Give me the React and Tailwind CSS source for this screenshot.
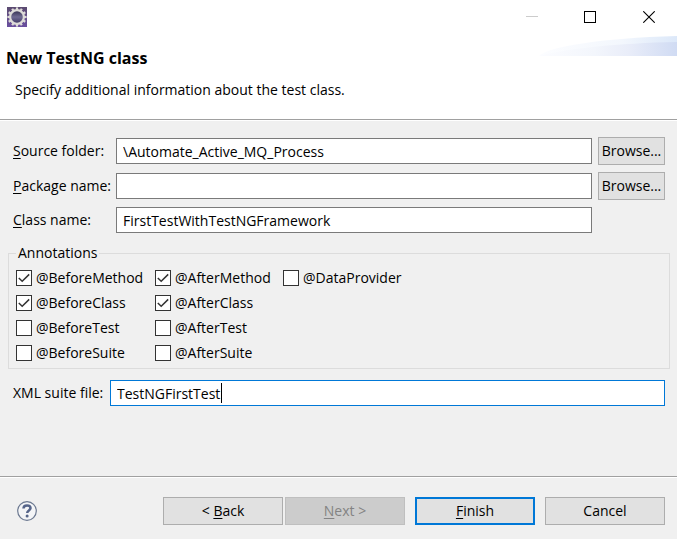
import React, { useState } from "react";

const ANNOTATIONS = [
  ["@BeforeMethod", "@AfterMethod", "@DataProvider"],
  ["@BeforeClass", "@AfterClass"],
  ["@BeforeTest", "@AfterTest"],
  ["@BeforeSuite", "@AfterSuite"],
];

const inputClass =
  "h-[26px] w-full min-w-0 border border-[#7a7a7a] bg-white px-1.5 outline-none focus:border-[#0078d7]";

function AppIcon() {
  const teeth = [0, 30, 60, 90, 120, 150, 180, 210, 240, 270, 300, 330];
  return (
    <svg width="20" height="20" viewBox="0 0 20 20" aria-hidden="true">
      <defs>
        <linearGradient id="icon-bg" x1="0" y1="0" x2="0" y2="1">
          <stop offset="0" stopColor="#5b4b70" />
          <stop offset="1" stopColor="#6a4fa0" />
        </linearGradient>
        <linearGradient id="icon-core" x1="0" y1="0" x2="0" y2="1">
          <stop offset="0" stopColor="#2f2b4a" />
          <stop offset="0.5" stopColor="#6f6a92" />
          <stop offset="1" stopColor="#3a3361" />
        </linearGradient>
      </defs>
      <rect width="20" height="20" fill="url(#icon-bg)" />
      {teeth.map((angle) => (
        <rect
          key={angle}
          x="8.9"
          y="0.4"
          width="2.2"
          height="3"
          fill="#dedbd8"
          transform={`rotate(${angle} 10 10)`}
        />
      ))}
      <circle cx="10" cy="10" r="6.9" fill="url(#icon-core)" stroke="#dddbd8" strokeWidth="2.2" />
    </svg>
  );
}

function TitleBar() {
  return (
    <div className="flex h-9 items-start justify-between bg-white">
      <div className="pt-[7px] pl-[7px]">
        <AppIcon />
      </div>
      <div className="flex">
        <button type="button" aria-label="Minimize" disabled className="flex h-[34px] w-[58px] items-center justify-center">
          <svg width="12" height="12" viewBox="0 0 12 12">
            <path d="M0 5.5h12" stroke="#cccccc" />
          </svg>
        </button>
        <button type="button" aria-label="Maximize" className="flex h-[34px] w-[58px] items-center justify-center">
          <svg width="12" height="12" viewBox="0 0 12 12">
            <rect x="0.5" y="0.5" width="11" height="11" fill="none" stroke="#000" />
          </svg>
        </button>
        <button type="button" aria-label="Close" className="mr-[-2px] flex h-[34px] w-[60px] items-center justify-center">
          <svg width="12" height="12" viewBox="0 0 12 12">
            <path d="M0.3 0.3l11.4 11.4M11.7 0.3L0.3 11.7" stroke="#000" strokeWidth="1.1" />
          </svg>
        </button>
      </div>
    </div>
  );
}

function Banner() {
  return (
    <header className="relative border-b border-[#a0a0a0] bg-white pt-2.5 pb-[17px]">
      <svg className="absolute top-0 right-0" width="138" height="20" viewBox="0 0 138 20" aria-hidden="true">
        <defs>
          <linearGradient id="swoosh">
            <stop offset="0" stopColor="#fcfdff" />
            <stop offset="0.6" stopColor="#f3f7fd" />
            <stop offset="1" stopColor="#dce8f9" />
          </linearGradient>
          <linearGradient id="swoosh-low" gradientUnits="userSpaceOnUse" x1="0" y1="0" x2="138" y2="0">
            <stop offset="0" stopColor="#fbfcff" />
            <stop offset="0.4" stopColor="#f3f6fc" />
            <stop offset="0.65" stopColor="#e9edf9" />
            <stop offset="1" stopColor="#d0dbf3" />
          </linearGradient>
        </defs>
        <path d="M0 20C8 11 62 2 138 0V20Z" fill="url(#swoosh)" />
        <path d="M0 20C24 13 80 7 138 6V20Z" fill="url(#swoosh-low)" />
      </svg>
      <h1 className="pl-1.5 text-[16px] leading-6 font-bold">New TestNG class</h1>
      <p className="pt-2 pl-[15px] leading-6">
        Specify additional information about the test class.
      </p>
    </header>
  );
}

function Mnemonic({ text }) {
  return (
    <>
      <span className="underline underline-offset-2">{text[0]}</span>
      {text.slice(1)}
    </>
  );
}

function Field({ id, label, value, onChange, browse }) {
  return (
    <div className="flex items-center">
      <label htmlFor={id} className="w-[103px] shrink-0 whitespace-nowrap">
        <Mnemonic text={label} />
      </label>
      <input id={id} value={value} onChange={(e) => onChange(e.target.value)} className={inputClass} />
      <div className="w-[73px] shrink-0 pl-1.5">
        {browse && (
          <button type="button" className="h-7 w-[67px] border border-[#adadad] bg-[#e1e1e1]">
            Browse...
          </button>
        )}
      </div>
    </div>
  );
}

function AnnotationCheckbox({ name, checked, onToggle }) {
  return (
    <label className="flex h-[25px] items-center gap-1">
      <span className="grid size-4 place-items-center">
        <input
          type="checkbox"
          checked={checked}
          onChange={() => onToggle(name)}
          className="col-start-1 row-start-1 size-4 appearance-none border border-[#333333] bg-white"
        />
        {checked && (
          <svg className="pointer-events-none col-start-1 row-start-1" width="16" height="16" viewBox="0 0 16 16">
            <path d="M2.8 8l3.4 3.3L13.2 4.4" fill="none" stroke="#333" strokeWidth="1.5" />
          </svg>
        )}
      </span>
      {name}
    </label>
  );
}

function HelpIcon() {
  return (
    <svg width="20" height="20" viewBox="0 0 20 20" aria-hidden="true">
      <circle cx="10" cy="10" r="9.3" fill="#f4f5f7" stroke="#6b7890" strokeWidth="1.2" />
      <path
        d="M6.5 7.4C6.5 5.2 8.1 4.4 10 4.4s3.5 0.8 3.5 2.6c0 2.4-3.3 2.4-3.3 5"
        fill="none"
        stroke="#56658a"
        strokeWidth="2.5"
      />
      <circle cx="10.1" cy="15" r="1.5" fill="#56658a" />
    </svg>
  );
}

export default function App() {
  const [folder, setFolder] = useState("\\Automate_Active_MQ_Process");
  const [packageName, setPackageName] = useState("");
  const [className, setClassName] = useState("FirstTestWithTestNGFramework");
  const [suiteFile, setSuiteFile] = useState("TestNGFirstTest");
  const [selected, setSelected] = useState([
    "@BeforeMethod",
    "@AfterMethod",
    "@BeforeClass",
    "@AfterClass",
  ]);

  const toggle = (name) =>
    setSelected((prev) =>
      prev.includes(name) ? prev.filter((n) => n !== name) : [...prev, name]
    );

  return (
    <div className="flex min-h-screen flex-col bg-[#f0f0f0] font-['Open_Sans',sans-serif] text-[14px] leading-5 text-black">
      <TitleBar />
      <Banner />

      <main className="flex-1 border-t border-white px-2 pt-4 pb-4">
        <div className="flex flex-col gap-[7px] pr-1 pl-[5px]">
          <Field id="folder" label="Source folder:" value={folder} onChange={setFolder} browse />
          <Field id="package" label="Package name:" value={packageName} onChange={setPackageName} browse />
          <Field id="class" label="Class name:" value={className} onChange={setClassName} />
        </div>

        {/* Annotations group */}
        <fieldset className="mt-2.5 -mr-px border border-[#dcdcdc] px-[7px] pt-0.5 pb-[3px]">
          <legend className="px-0.5 leading-5">Annotations</legend>
          <div className="flex flex-col">
            {ANNOTATIONS.map((row) => (
              <div key={row[0]} className="grid grid-cols-[139px_128px_1fr]">
                {row.map((name) => (
                  <AnnotationCheckbox
                    key={name}
                    name={name}
                    checked={selected.includes(name)}
                    onToggle={toggle}
                  />
                ))}
              </div>
            ))}
          </div>
        </fieldset>

        <div className="mt-[11px] flex items-center pr-1 pl-[5px]">
          <label htmlFor="suite" className="w-[97px] shrink-0 whitespace-nowrap">
            XML suite file:
          </label>
          <div className="relative flex-1">
            <input
              id="suite"
              value={suiteFile}
              onChange={(e) => setSuiteFile(e.target.value)}
              className="h-[26px] w-full border border-[#0078d7] bg-white px-1.5 caret-transparent outline-none"
            />
            {/* text cursor */}
            <span className="absolute top-[3px] left-[111px] h-5 w-px bg-black" />
          </div>
        </div>
      </main>

      <footer className="border-t border-[#a0a0a0]">
        <div className="flex items-center border-t border-white pt-[19px] pr-3 pb-3.5 pl-[17px]">
          <button type="button" aria-label="Help">
            <HelpIcon />
          </button>
          <div className="ml-auto flex gap-2.5">
            <div className="flex gap-0.5">
              <button type="button" className="h-7 w-[120px] border border-[#adadad] bg-[#e1e1e1]">
                &lt; <Mnemonic text="Back" />
              </button>
              <button type="button" disabled className="h-7 w-[120px] border border-[#bfbfbf] bg-[#cccccc] text-[#838383]">
                <Mnemonic text="Next" /> &gt;
              </button>
            </div>
            <button type="button" className="h-7 w-[120px] border-2 border-[#0078d7] bg-[#e1e1e1]">
              <Mnemonic text="Finish" />
            </button>
            <button type="button" className="h-7 w-[120px] border border-[#adadad] bg-[#e1e1e1]">
              Cancel
            </button>
          </div>
        </div>
      </footer>
    </div>
  );
}
